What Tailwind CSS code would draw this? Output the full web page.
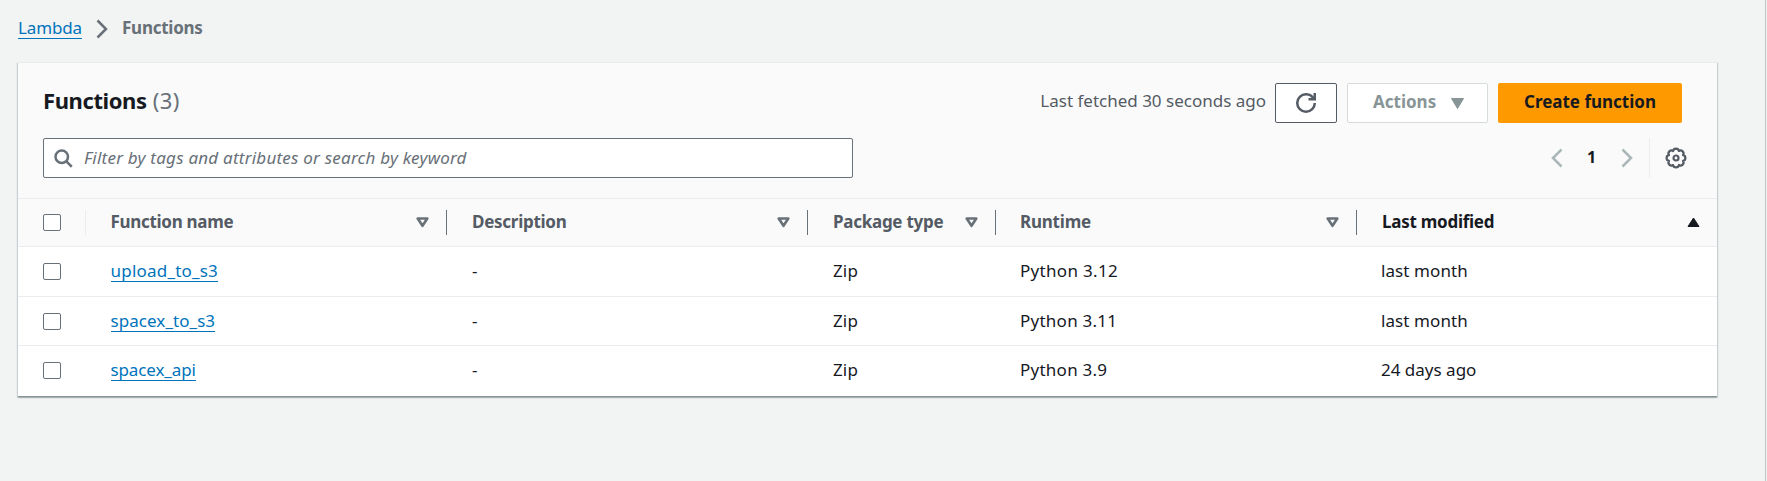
<!DOCTYPE html>
<html lang="en">
<head>
<meta charset="utf-8">
<title>Functions - Lambda</title>
<script src="https://cdn.jsdelivr.net/npm/@tailwindcss/browser@4"></script>
</head>
<body class="h-[481px] overflow-hidden bg-[#f2f3f3] font-['Noto_Sans',sans-serif] text-[17px] leading-6 whitespace-nowrap text-[#16191f]">
<svg class="hidden">
  <symbol id="sort" viewBox="0 0 13 11"><path d="M1.700 1.500h9.600L6.500 8.800z" fill="none" stroke="#687078" stroke-width="2.600" stroke-linejoin="round"/></symbol>
</svg>
<div class="flex h-full">
<main class="min-w-0 flex-1 pl-[18px]">
  <nav class="flex h-[62px] items-start pt-4">
    <a class="h-[23px] border-b border-[#0073bb] tracking-[-0.13px] text-[#0073bb]">Lambda</a>
    <svg class="mt-[3px] ml-[14px] h-5 w-3" viewBox="0 0 12 20" fill="none" stroke="#687078" stroke-width="2.500"><path d="M1.500 1.500 10 10 1.500 18.500"/></svg>
    <span class="ml-[14px] font-bold tracking-[-0.25px] text-[#687078]">Functions</span>
  </nav>

  <section class="w-[1699px] border-t border-[#eaeded] bg-white shadow-[1px_1px_1px_0_rgba(0,28,36,0.17),-1px_1px_1px_0_rgba(0,28,36,0.17)]">
    <header class="h-[136px] border-b border-[#eaeded] bg-[#fafafa] pt-5 pr-[35px] pl-[25px]">
      <div class="flex h-10 items-center">
        <div class="flex pb-[7px] text-[22px]">
          <h1 class="font-bold tracking-[-0.4px]">Functions</h1>
          <span class="ml-[6px] tracking-[0.4px] text-[#687078]">(3)</span>
        </div>
        <div class="ml-auto flex h-10 items-center">
          <span class="pb-1 text-[#545b64]">Last fetched 30 seconds ago</span>
          <button class="ml-[9px] flex h-10 w-[62px] items-center justify-center rounded-[2px] border border-[#545b64] bg-white"><svg class="h-5 w-5" viewBox="0 0 16 16" fill="none" stroke="#545b64" stroke-width="2"><path d="M10 5h5V0"/><path d="M15 8a6.957 6.957 0 0 1-7 7 6.957 6.957 0 0 1-7-7 6.957 6.957 0 0 1 7-7 6.870 6.870 0 0 1 6.300 4"/></svg></button>
          <button class="ml-[10px] flex h-10 w-[141px] items-center rounded-[2px] border border-[#d5dbdb] bg-white pl-[25px] font-bold text-[#879596]"><span class="pb-0.5">Actions</span><svg class="mr-[23px] ml-auto h-[11px] w-[13px]" viewBox="0 0 13 11" fill="#879596"><path d="M.5.5h12L6.500 10.500z" stroke="#879596" stroke-linejoin="round"/></svg></button>
          <button class="ml-[10px] flex h-10 w-[184px] items-center justify-center rounded-[2px] bg-[#ff9900] pb-0.5 font-bold">Create function</button>
        </div>
      </div>
      <div class="mt-[15px] flex h-10 items-center justify-between">
        <div class="flex h-10 w-[810px] items-center rounded-[2px] border border-[#687078] bg-white pl-[9px] text-[#687078]">
          <svg class="h-5 w-5" viewBox="0 0 16 16" fill="none" stroke="#687078" stroke-width="2"><circle cx="7" cy="7" r="5"/><path d="m15 15-4.500-4.500"/></svg>
          <span class="ml-[11px] pb-px tracking-[0.23px] italic">Filter by tags and attributes or search by keyword</span>
        </div>
        <div class="-mr-[4px] flex h-10 items-center">
          <svg class="h-5 w-3" viewBox="0 0 12 20" fill="none" stroke="#aab7b8" stroke-width="2.500"><path d="M10.500 1.500 2 10l8.500 8.500"/></svg>
          <span class="w-[58px] pr-px pb-0.5 text-center text-base font-bold">1</span>
          <svg class="h-5 w-3" viewBox="0 0 12 20" fill="none" stroke="#aab7b8" stroke-width="2.500"><path d="M1.500 1.500 10 10l-8.500 8.500"/></svg>
          <div class="ml-4 h-10 border-l border-[#eaeded]"></div>
          <svg class="ml-4 h-5 w-5 overflow-visible" viewBox="0 0 20 20" fill="none" stroke="#545b64" stroke-width="2.200" stroke-linejoin="round"><circle cx="10" cy="10" r="2.500"/><path d="M7.100 3A2.950 2.950 0 0 1 12.900 3A2.950 2.950 0 0 1 17 7.100A2.950 2.950 0 0 1 17 12.900A2.950 2.950 0 0 1 12.900 17A2.950 2.950 0 0 1 7.100 17A2.950 2.950 0 0 1 3 12.900A2.950 2.950 0 0 1 3 7.100A2.950 2.950 0 0 1 7.100 3z"/></svg>
        </div>
      </div>
    </header>

    <div class="grid h-12 grid-cols-[68px_361px_361px_188px_361px_360px] items-center border-b border-[#eaeded] bg-[#fafafa] font-bold text-[#545b64]">
      <div class="flex h-[25px] items-center border-r border-[#eaeded] pl-[25px]"><i class="block h-[17px] w-[18px] rounded-[2px] border border-[#687078] bg-white"></i></div>
      <div class="flex h-[25px] items-center justify-between border-r border-[#687078] pr-[17.5px] pl-[24.5px]"><span class="pb-0.5 tracking-[-0.3px]">Function name</span><svg class="h-[11px] w-[13px]"><use href="#sort"/></svg></div>
      <div class="flex h-[25px] items-center justify-between border-r border-[#687078] pr-[17.5px] pl-[25px]"><span class="pb-0.5 tracking-[-0.27px]">Description</span><svg class="h-[11px] w-[13px]"><use href="#sort"/></svg></div>
      <div class="flex h-[25px] items-center justify-between border-r border-[#687078] pr-[17.5px] pl-[25px]"><span class="pb-0.5 tracking-[-0.27px]">Package type</span><svg class="h-[11px] w-[13px]"><use href="#sort"/></svg></div>
      <div class="flex h-[25px] items-center justify-between border-r border-[#687078] pr-[17.5px] pl-[24px]"><span class="pb-0.5 tracking-[-0.21px]">Runtime</span><svg class="h-[11px] w-[13px]"><use href="#sort"/></svg></div>
      <div class="flex h-[25px] items-center justify-between pr-[17.5px] pl-[25px] text-[#16191f]"><span class="pb-0.5 tracking-[-0.26px]">Last modified</span><svg class="h-[11px] w-[13px]" viewBox="0 0 13 11" fill="#16191f" stroke="#16191f" stroke-linejoin="round"><path d="M1 9.500h11L6.500 1z"/></svg></div>
    </div>

    <div class="grid h-[50px] grid-cols-[68px_361px_361px_188px_361px_360px] items-center border-b border-[#eaeded]">
      <div class="pl-[25px]"><i class="block h-[17px] w-[18px] rounded-[2px] border border-[#687078] bg-white"></i></div>
      <div class="flex pb-0.5 pl-[24.5px]"><a class="h-[23px] border-b border-[#0073bb] tracking-[0.21px] text-[#0073bb]">upload_to_s3</a></div>
      <div class="pb-0.5 pl-[25px]">-</div>
      <div class="pb-0.5 pl-[25px] tracking-[0.14px]">Zip</div>
      <div class="pb-0.5 pl-6 tracking-[0.31px]">Python 3.12</div>
      <div class="pb-0.5 pl-6 tracking-[0.1px]">last month</div>
    </div>
    <div class="grid h-[49px] grid-cols-[68px_361px_361px_188px_361px_360px] items-center border-b border-[#eaeded]">
      <div class="pl-[25px]"><i class="block h-[17px] w-[18px] rounded-[2px] border border-[#687078] bg-white"></i></div>
      <div class="flex pb-px pl-[24.5px]"><a class="h-[23px] border-b border-[#0073bb] tracking-[0.06px] text-[#0073bb]">spacex_to_s3</a></div>
      <div class="pl-[25px]">-</div>
      <div class="pl-[25px] tracking-[0.14px]">Zip</div>
      <div class="pl-6 tracking-[0.25px]">Python 3.11</div>
      <div class="pl-6 tracking-[0.1px]">last month</div>
    </div>
    <div class="grid h-[50px] grid-cols-[68px_361px_361px_188px_361px_360px] items-center">
      <div class="pb-px pl-[25px]"><i class="block h-[17px] w-[18px] rounded-[2px] border border-[#687078] bg-white"></i></div>
      <div class="flex pb-[3px] pl-[24.5px]"><a class="h-[23px] border-b border-[#0073bb] tracking-[-0.12px] text-[#0073bb]">spacex_api</a></div>
      <div class="pb-0.5 pl-[25px]">-</div>
      <div class="pb-0.5 pl-[25px] tracking-[0.14px]">Zip</div>
      <div class="pb-0.5 pl-6 tracking-[0.25px]">Python 3.9</div>
      <div class="pb-0.5 pl-6">24 days ago</div>
    </div>
    <div class="h-px bg-[#879596]"></div>
  </section>
</main>
<aside class="w-[2px] border-l border-[#c3c9c9] bg-[#eaeded]"></aside>
</div>
</body>
</html>
